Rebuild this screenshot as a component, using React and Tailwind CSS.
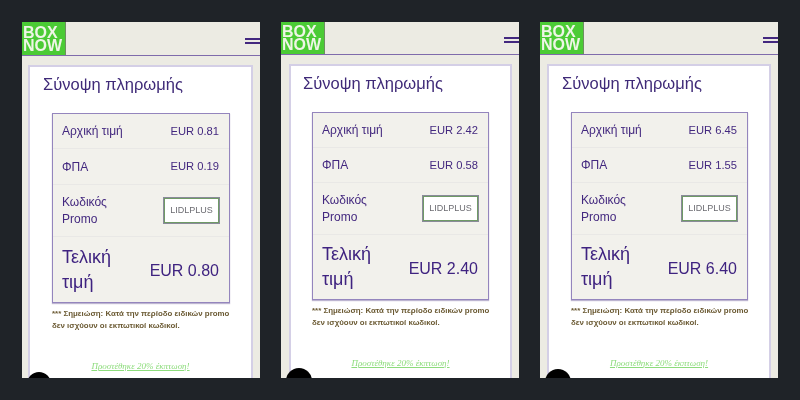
import React from 'react';

const phones = [
  { id: 1, start: '0.81', vat: '0.19', total: '0.80', headerH: 'h-[34px]', burgerTop: 'mt-[16px]', cardX: 'ml-[6px] mr-[7px]', titleX: 'pl-[13px]', tableX: 'ml-[22px] mr-[21px]', noteX: 'ml-[22px] mr-[12px]', rowH: 'h-[35px]', secondH: 'h-[36px]', lastH: 'h-[65px]', bubble: 'top-[350px] h-[24px] w-[24px]' },
  { id: 2, start: '2.42', vat: '0.58', total: '2.40', headerH: 'h-[33px]', burgerTop: 'mt-[15px]', cardX: 'ml-[8px] mr-[7px]', titleX: 'pl-[12px]', tableX: 'mx-[21px]', noteX: 'ml-[21px] mr-[12px]', rowH: 'h-[35px]', secondH: 'h-[35px]', lastH: 'h-[64px]', bubble: 'top-[346px] h-[26px] w-[26px]' },
  { id: 3, start: '6.45', vat: '1.55', total: '6.40', headerH: 'h-[33px]', burgerTop: 'mt-[15px]', cardX: 'mx-[7px]', titleX: 'pl-[13px]', tableX: 'ml-[22px] mr-[21px]', noteX: 'ml-[22px] mr-[12px]', rowH: 'h-[35px]', secondH: 'h-[35px]', lastH: 'h-[64px]', bubble: 'top-[347px] h-[26px] w-[26px]' },
];

const Row = ({ label, value, height }) => (
  <div className={`flex ${height} items-center justify-between border-b border-[#e9e8e6] pl-[9px] pr-[10px] text-[12px] text-[#43287f]`}>
    <span>{label}</span>
    <span className="text-[11.2px]">{value}</span>
  </div>
);

const Phone = ({ start, vat, total, headerH, burgerTop, cardX, titleX, tableX, noteX, rowH, secondH, lastH, bubble }) => (
  <div className="relative h-[356px] w-[238px] shrink-0 overflow-hidden bg-[#ecebe3] blur-[0.45px]">
    {/* Header */}
    <div className={`flex ${headerH} items-start justify-between border-b border-[#7f6bab]`}>
      <div className="flex h-full w-[44px] flex-col items-start justify-center border-r border-[#6d8f60] bg-[#4bcb35] pl-[1px] text-[16px] font-bold leading-[13px] text-[#eef5e6]">
        <span>BOX</span>
        <span>NOW</span>
      </div>
      <div className={`${burgerTop} flex w-[15px] flex-col gap-[2px]`}>
        <div className="h-[2px] bg-[#43287f]" />
        <div className="h-[2px] bg-[#43287f]" />
      </div>
    </div>

    {/* Card */}
    <div className={`${cardX} mt-[9px] h-[340px] border-2 border-b-0 border-[#d4cfe6] bg-white`}>
      <h1 className={`${titleX} pt-[5px] text-[16.5px] font-normal leading-[24px] text-[#3f2a78]`}>Σύνοψη πληρωμής</h1>
      <div className={`${tableX} mt-[17px] border border-[#9485bd] bg-[#f2f1ec] shadow-[0_1px_1px_rgba(90,70,140,0.4)]`}>
        <Row label="Αρχική τιμή" value={`EUR ${start}`} height={rowH} />
        <Row label="ΦΠΑ" value={`EUR ${vat}`} height={secondH} />
        <div className="flex h-[52px] items-center justify-between border-b border-[#e9e8e6] pl-[9px] pr-[10px] text-[12px] leading-[17px] text-[#43287f]">
          <span className="w-[60px]">Κωδικός Promo</span>
          <div className="flex h-[25px] w-[55px] items-center justify-center border border-[#6f9a66] bg-white text-[9px] text-[#6c6c72] ring-1 ring-[#8a8a9a]">
            LIDLPLUS
          </div>
        </div>
        <div className={`flex ${lastH} items-center justify-between pl-[9px] pr-[10px] text-[#3f2380]`}>
          <span className="w-[60px] text-[18px] leading-[25px]">Τελική τιμή</span>
          <span className="mt-[3px] text-[16px]">EUR {total}</span>
        </div>
      </div>
      <p className={`${noteX} mt-[5px] text-[7.9px] font-bold leading-[12px] text-[#6b5a33]`}>
        *** Σημειώση: Κατά την περίοδο ειδικών promo δεν ισχύουν οι εκπωτικοί κωδικοί.
      </p>
      <p className="mt-[28px] text-center font-['Liberation_Serif',serif] text-[9px] italic text-[#8ddc7c] underline">
        Προστέθηκε 20% έκπτωση!
      </p>
    </div>

    {/* Chat bubble peeking in at the bottom */}
    <div className={`absolute left-[5px] rounded-full bg-black ${bubble}`} />
  </div>
);

export default function App() {
  return (
    <div className="flex h-[400px] w-[800px] gap-[21px] overflow-hidden bg-[#1f2328] pl-[22px] pt-[22px] font-['Liberation_Sans',sans-serif]">
      {phones.map((p) => (
        <Phone key={p.id} {...p} />
      ))}
    </div>
  );
}
